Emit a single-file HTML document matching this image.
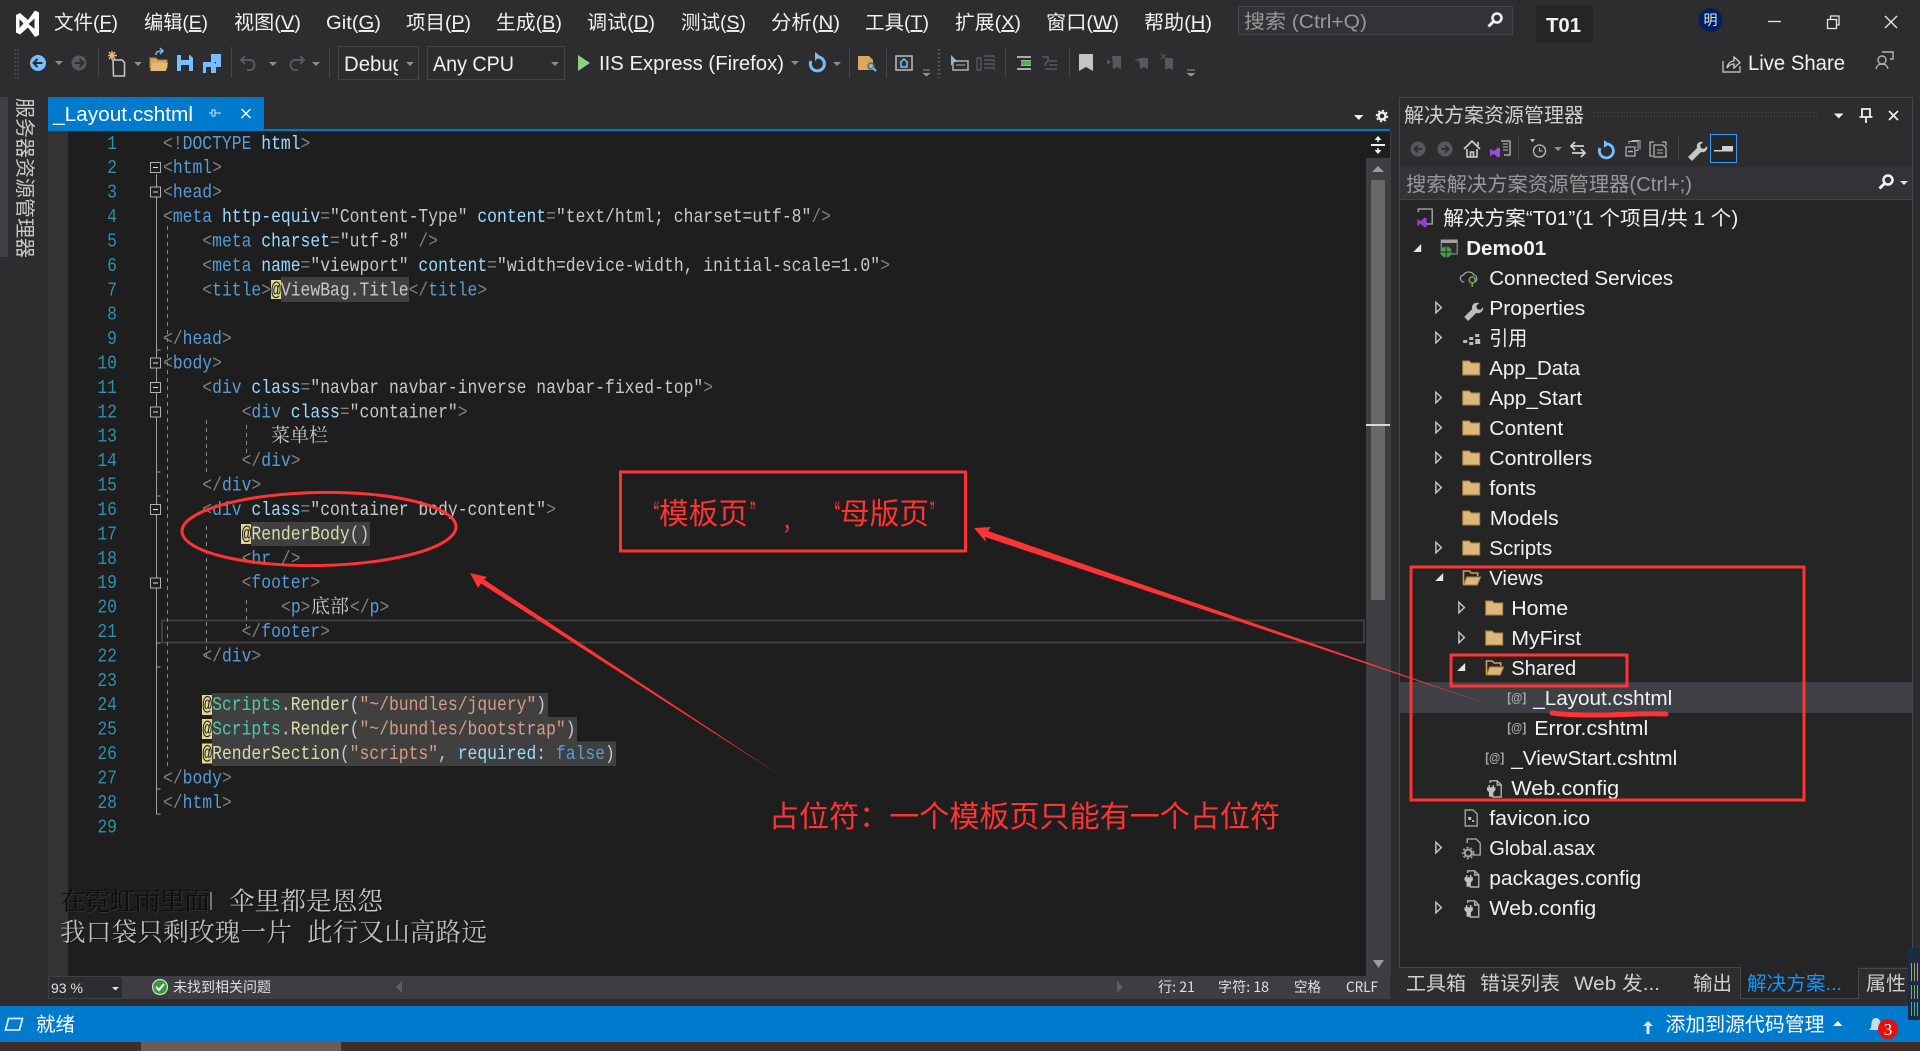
<!DOCTYPE html>
<html lang="zh"><head><meta charset="utf-8"><title>_Layout.cshtml - T01</title>
<style>
html,body{margin:0;padding:0;background:#2d2d30;width:1920px;height:1051px;overflow:hidden}
svg{display:block;position:absolute;left:0;top:0}
text{font-family:"Liberation Sans","Noto Sans CJK SC",sans-serif;white-space:pre}
.m{font-size:19.5px;fill:#f1f1f1}
.tr{font-size:20px;fill:#f1f1f1}
.c{font-family:"Liberation Mono","Noto Serif CJK SC",monospace;font-size:19.66px;fill:#c8c8c8}
.cj{font-family:"Noto Serif CJK SC","Liberation Serif",serif;font-size:19px;fill:#c8c8c8}
.n{font-family:"Liberation Mono",monospace;font-size:19.66px;fill:#2b91af}
.b{fill:#808080}.t{fill:#569cd6}.a{fill:#9cdcfe}.s{fill:#d69d85}.g{fill:#4ec9b0}.y{fill:#dcdcaa}
.st{font-size:14px;fill:#e0e0e0;font-family:"Noto Sans CJK SC","Liberation Sans",sans-serif}
.ly{font-family:"Noto Serif CJK SC","Liberation Serif",serif;font-size:25.6px}
.rd{font-family:"Noto Sans CJK SC",sans-serif;fill:#f33}
.bt{font-size:19.5px;fill:#d0d0d0}
</style></head><body>
<svg width="1920" height="1051" viewBox="0 0 1920 1051" xmlns="http://www.w3.org/2000/svg">
<defs>
<g id="fo"><path d="M0 1h6.500l2 2h8.500v12H0z" fill="#dcb67a" stroke="#a9803f" stroke-width="1"/></g>
<g id="fop"><path d="M0 1h6.500l2 2h6.500v3" fill="none" stroke="#c9a15c" stroke-width="1.600"/><path d="M.800 1v14" stroke="#c9a15c" stroke-width="1.600"/><path d="M1 15l3-8h14l-3.500 8z" fill="#dcb67a" stroke="#a9803f"/></g>
<path id="ar" d="M.700.700l5.500 5.300-5.500 5.300z" fill="none" stroke="#c8c8c8" stroke-width="1.400"/>
<path id="ad" d="M8 0v8H0z" fill="#e6e6e6"/>
<g id="wc" fill="none" stroke="#b0b0b0" stroke-width="1.400"><path d="M5 3V.800h7l4 4V17H7"/><path d="M12 1v4h4"/><path d="M4 5v3.500M8 5v3.500M2.500 8h7v2l-2 2v4h-3v-4l-2-2z" fill="#c0c0c0" stroke="#c0c0c0"/></g>
<path id="cr" d="M0 0h8l-4 4z" fill="#8f8f8f"/>
</defs>

<rect width="1920" height="1051" fill="#2d2d30"/>

<!-- title bar -->
<path d="M16 15l4-2 8 7 7-9.500 4 2v22.500l-4 2-7-9.500-8 7-4-2zM19.500 19v9l4-4.500zM28.500 24l6 5V18.500z" fill="#fff" fill-rule="evenodd"/>
<text class="m" x="54" y="29" textLength="64" lengthAdjust="spacingAndGlyphs">文件(<tspan text-decoration="underline">F</tspan>)</text>
<text class="m" x="144" y="29" textLength="64" lengthAdjust="spacingAndGlyphs">编辑(<tspan text-decoration="underline">E</tspan>)</text>
<text class="m" x="234" y="29" textLength="67" lengthAdjust="spacingAndGlyphs">视图(<tspan text-decoration="underline">V</tspan>)</text>
<text class="m" x="326" y="29" textLength="55" lengthAdjust="spacingAndGlyphs">Git(<tspan text-decoration="underline">G</tspan>)</text>
<text class="m" x="406" y="29" textLength="65" lengthAdjust="spacingAndGlyphs">项目(<tspan text-decoration="underline">P</tspan>)</text>
<text class="m" x="496" y="29" textLength="66" lengthAdjust="spacingAndGlyphs">生成(<tspan text-decoration="underline">B</tspan>)</text>
<text class="m" x="587" y="29" textLength="68" lengthAdjust="spacingAndGlyphs">调试(<tspan text-decoration="underline">D</tspan>)</text>
<text class="m" x="681" y="29" textLength="65" lengthAdjust="spacingAndGlyphs">测试(<tspan text-decoration="underline">S</tspan>)</text>
<text class="m" x="771" y="29" textLength="69" lengthAdjust="spacingAndGlyphs">分析(<tspan text-decoration="underline">N</tspan>)</text>
<text class="m" x="865" y="29" textLength="64" lengthAdjust="spacingAndGlyphs">工具(<tspan text-decoration="underline">T</tspan>)</text>
<text class="m" x="955" y="29" textLength="66" lengthAdjust="spacingAndGlyphs">扩展(<tspan text-decoration="underline">X</tspan>)</text>
<text class="m" x="1046" y="29" textLength="73" lengthAdjust="spacingAndGlyphs">窗口(<tspan text-decoration="underline">W</tspan>)</text>
<text class="m" x="1144" y="29" textLength="68" lengthAdjust="spacingAndGlyphs">帮助(<tspan text-decoration="underline">H</tspan>)</text>
<rect x="1238.500" y="6.500" width="274" height="28" fill="#333337" stroke="#434346"/>
<text x="1244" y="28" font-size="19.500" fill="#999" textLength="123" lengthAdjust="spacingAndGlyphs">搜索 (Ctrl+Q)</text>
<g stroke="#f1f1f1" fill="none"><circle cx="1497" cy="18" r="4.500" stroke-width="2.500"/><path d="M1493.500 21.500l-5 5" stroke-width="3"/></g>
<rect x="1536" y="5" width="57" height="38" fill="#252526"/>
<text x="1546" y="32" font-size="20" font-weight="700" fill="#f1f1f1" textLength="35" lengthAdjust="spacingAndGlyphs">T01</text>
<circle cx="1710.500" cy="20" r="12" fill="#002060"/>
<text x="1703.500" y="25" font-size="14" fill="#e8e8e8" style="font-family:'Noto Sans CJK SC',sans-serif">明</text>
<path d="M1768 21.500h13" stroke="#e8e8e8" stroke-width="1.300"/>
<path d="M1827.500 19.500h9v9h-9zM1830.500 19v-3h8.500v9h-2.500" fill="none" stroke="#e8e8e8" stroke-width="1.300"/>
<path d="M1885 16l12 12M1897 16l-12 12" stroke="#e8e8e8" stroke-width="1.300"/>

<!-- main toolbar -->
<path d="M15 49v29M18 49v29" stroke="#55555a" stroke-dasharray="1.500 2.500" stroke-width="1.500"/>
<circle cx="38" cy="63" r="8" fill="#75beff"/><path d="M42.500 63h-8M37.500 59l-4 4 4 4" stroke="#2d2d30" stroke-width="2" fill="none"/>
<use href="#cr" x="55" y="61"/>
<circle cx="79" cy="63" r="7.500" fill="#58585c"/><path d="M74.500 63h8M79.500 59l4 4-4 4" stroke="#2d2d30" stroke-width="2" fill="none"/>
<path d="M98.500 47v31" stroke="#46464a"/>
<path d="M113 60h9l2.500 2.500V76h-11z" fill="none" stroke="#c8c8c8" stroke-width="1.500"/><path d="M112 51v9M108 55.500h9M109 52l6 7M115 52l-6 7" stroke="#e8ba70" stroke-width="1.500"/>
<use href="#cr" x="134" y="62"/>
<path d="M150 68h17v-8h-9l-2-2h-6z" fill="#d8a95c" stroke="#a9803f"/><path d="M150 71l3-8h15l-2 8z" fill="#e6b974"/><path d="M156 55c0-4 3-4 6-4M160 48l3 3-3 3" stroke="#75beff" stroke-width="1.500" fill="none"/>
<path d="M177 55h13l3 3v13h-16z" fill="#75beff"/><path d="M181 55h8v5h-8z" fill="#2d2d30"/><path d="M181 65h8v6h-8z" fill="#2d2d30"/>
<path d="M203 62h11l2 2v9h-13z" fill="#75beff"/><path d="M211 54h10v13h-5v-5h-5z" fill="#75beff"/><path d="M206 67h5v6h-5z" fill="#2d2d30"/>
<path d="M231.500 47v31" stroke="#46464a"/>
<path d="M245 56l-4 4 4 4M241 60h9c6 0 6 10 0 10h-3" stroke="#5a5a5e" stroke-width="2" fill="none"/>
<use href="#cr" x="269" y="62"/>
<path d="M300 56l4 4-4 4M304 60h-9c-6 0-6 10 0 10h3" stroke="#5a5a5e" stroke-width="2" fill="none"/>
<use href="#cr" x="312" y="62"/>
<path d="M329.500 47v31" stroke="#46464a"/>
<rect x="338.500" y="46.500" width="80" height="33" fill="#2d2d30" stroke="#434346"/>
<text x="344" y="71" font-size="21" fill="#f1f1f1" textLength="60" lengthAdjust="spacingAndGlyphs">Debug</text>
<rect x="398" y="48" width="20" height="30" fill="#2d2d30"/>
<use href="#cr" x="406" y="62"/>
<rect x="427.500" y="46.500" width="137" height="33" fill="#2d2d30" stroke="#434346"/>
<text x="433" y="71" font-size="21" fill="#f1f1f1" textLength="81" lengthAdjust="spacingAndGlyphs">Any CPU</text>
<use href="#cr" x="551" y="62"/>
<path d="M578 55l12 8-12 8z" fill="#89d185"/>
<text x="599" y="70" font-size="20.500" fill="#f1f1f1" textLength="185" lengthAdjust="spacingAndGlyphs">IIS Express (Firefox)</text>
<use href="#cr" x="791" y="61"/>
<path d="M811 61a7 7 0 1 0 5-4" fill="none" stroke="#75beff" stroke-width="3"/><path d="M815 52v9l5-5z" fill="#75beff"/>
<use href="#cr" x="833" y="62"/>
<path d="M849.500 47v31" stroke="#46464a"/>
<path d="M858 56h11l4 4v10h-15z" fill="#d8a95c"/><circle cx="871" cy="66" r="3" fill="none" stroke="#2b6fb0" stroke-width="1.500"/><path d="M873 68l3 3" stroke="#75beff" stroke-width="2"/>
<path d="M886.500 47v31" stroke="#46464a"/>
<rect x="896" y="56" width="16" height="14" fill="#333" stroke="#bbb" stroke-width="1.500"/><path d="M900 63l4-4 4 4M901 63v4h6v-4" stroke="#75beff" stroke-width="1.500" fill="none"/>
<path d="M923 70h7M923 73l3.500 3 3.500-3" stroke="#8f8f8f" fill="#8f8f8f"/>
<path d="M939 49v29" stroke="#55555a" stroke-dasharray="1.500 2.500" stroke-width="3"/>
<path d="M951 55l7 7h-4l-3 4z" fill="#75beff"/><path d="M953 61h15v9h-15z" fill="none" stroke="#b0b0b0" stroke-width="1.500"/><path d="M956 65h9" stroke="#b0b0b0"/>
<path d="M977 58h4v12h-4zM984 56h10v2M984 60h10v2M984 64h10v2M984 68h10v2" fill="none" stroke="#58585c" stroke-width="1.400"/>
<path d="M1005.500 47v31" stroke="#46464a"/>
<path d="M1017 57h14M1021 61h10M1021 65h10M1017 69h14" stroke="#d6d6d6" stroke-width="1.500"/><path d="M1021 61h10v4h-10z" fill="#4caf50"/>
<path d="M1042 57h6v4l-3 3v2M1049 61h8M1049 65h8M1045 69h12" stroke="#58585c" stroke-width="1.500" fill="none"/>
<path d="M1069.500 47v31" stroke="#46464a"/>
<path d="M1079 54h14v17l-7-4-7 4z" fill="#c4c4c4"/>
<path d="M1112 56h9v13l-4-2-4 2zM1107 59l4 3-4 3" fill="#58585c"/>
<path d="M1139 58h9v11l-4-2-4 2zM1134 59h6v3" fill="#58585c"/>
<path d="M1165 58h8v12l-4-2-4 2z" fill="#58585c"/><path d="M1161 54l5 5M1166 54l-5 5" stroke="#58585c"/>
<path d="M1187 70h8M1187 73l4 3 4-3" stroke="#8f8f8f" fill="#8f8f8f"/>

<path d="M1723 61v11h17v-6" fill="none" stroke="#b5b5b5" stroke-width="1.400"/><path d="M1727 68c1-5 4-7 7-7v-4l6 5.500-6 5.500v-4c-3 0-5 1-7 4z" fill="none" stroke="#d0d0d0" stroke-width="1.300"/>
<text x="1748" y="70" font-size="21" fill="#f1f1f1" textLength="97" lengthAdjust="spacingAndGlyphs">Live Share</text>
<circle cx="1882" cy="60" r="4" fill="none" stroke="#b5b5b5" stroke-width="1.400"/><path d="M1876 69c1-4 3-5 6-5s5 1 6 5M1882 52h11v7h-3" fill="none" stroke="#b5b5b5" stroke-width="1.400"/>

<!-- server explorer strip -->
<rect x="0" y="97" width="8" height="160" fill="#3f3f46"/>
<text transform="translate(14,98) rotate(90) translate(0,-22)" x="0" y="18" font-size="20" fill="#c8c8c8" textLength="160" lengthAdjust="spacingAndGlyphs" style="font-family:'Noto Sans CJK SC',sans-serif">服务器资源管理器</text>

<!-- tabs -->
<rect x="48" y="97" width="216" height="34" fill="#007acc"/>
<rect x="48" y="129" width="1342" height="2" fill="#007acc"/>
<text x="53" y="121" font-size="20" fill="#fff" textLength="140" lengthAdjust="spacingAndGlyphs">_Layout.cshtml</text>
<path d="M212 110h3v6h-3zM215 109.500v7M215 113h6M209 113h3" stroke="#d8e8f5" fill="none"/>
<path d="M241.500 109l9 9M250.500 109l-9 9" stroke="#fff" stroke-width="1.300"/>
<path d="M1354 115h9.500l-4.750 5z" fill="#f1f1f1"/>
<circle cx="1382" cy="116" r="3.500" fill="none" stroke="#f1f1f1" stroke-width="2.500"/><circle cx="1382" cy="116" r="5.500" fill="none" stroke="#f1f1f1" stroke-width="1.500" stroke-dasharray="2 2.300"/>

<!-- editor -->
<rect x="48" y="131" width="20" height="845" fill="#333333"/>
<rect x="68" y="131" width="1298" height="845" fill="#1e1e1e"/>
<rect x="1366" y="131" width="25" height="845" fill="#3e3e42"/>
<rect x="1366" y="131" width="24" height="27" fill="#1e1e1e"/>
<path d="M1371 145h14" stroke="#f0f0f0" stroke-width="2"/><path d="M1378 142v-4M1378 148v4" stroke="#f0f0f0" stroke-width="1.500"/><path d="M1374.500 140l3.500-4 3.500 4zM1374.500 150l3.500 4 3.500-4z" fill="#f0f0f0"/>
<path d="M1378 166l-6 6h12z" fill="#9a9a9a"/>
<rect x="1371" y="180" width="14" height="420" fill="#686868"/>
<rect x="1366" y="424" width="24" height="2" fill="#d8d8d8"/>
<path d="M1373 960h11l-5.500 8z" fill="#9a9a9a"/>
<rect x="48" y="976" width="1342" height="23" fill="#3e3e42"/>
<rect x="48.500" y="976.500" width="74" height="22" fill="#2d2d30" stroke="#3f3f46"/>
<text class="st" x="51" y="993" style="font-family:'Liberation Sans',sans-serif" font-size="15" textLength="32" lengthAdjust="spacingAndGlyphs">93 %</text>
<path d="M112 987h7l-3.500 3.500z" fill="#e0e0e0"/>
<circle cx="160" cy="987" r="7.500" fill="#389a3d" stroke="#d8d8d8" stroke-width="1.200"/><path d="M156 987l3 3 5-6" stroke="#fff" stroke-width="2" fill="none"/>
<text class="st" x="173" y="992" textLength="98" lengthAdjust="spacingAndGlyphs">未找到相关问题</text>
<path d="M402 981v12l-6-6z" fill="#5e5e62"/>
<path d="M1117 981v12l6-6z" fill="#5e5e62"/>
<text class="st" x="1158" y="992" textLength="37" lengthAdjust="spacingAndGlyphs">行: 21</text>
<text class="st" x="1218" y="992" textLength="51" lengthAdjust="spacingAndGlyphs">字符: 18</text>
<text class="st" x="1294" y="992" textLength="27" lengthAdjust="spacingAndGlyphs">空格</text>
<text class="st" x="1346" y="992" textLength="32" lengthAdjust="spacingAndGlyphs">CRLF</text>

<!-- highlights -->
<rect x="281" y="277" width="128" height="25" fill="#404040"/><rect x="271" y="280" width="10" height="19" fill="#e0d68f"/>
<rect x="251" y="522" width="119" height="24" fill="#404040"/><rect x="241" y="524" width="10" height="20" fill="#e0d68f"/>
<rect x="212" y="693" width="336" height="24" fill="#404040"/><rect x="202" y="695" width="10" height="20" fill="#e0d68f"/>
<rect x="212" y="717" width="365" height="24.500" fill="#404040"/><rect x="202" y="719" width="10" height="20" fill="#e0d68f"/>
<rect x="212" y="741.500" width="404" height="24.500" fill="#404040"/><rect x="202" y="743.500" width="10" height="20" fill="#e0d68f"/>
<rect x="162" y="620.500" width="1202" height="22" fill="none" stroke="#3f3f3f" stroke-width="2"/>

<!-- fold margin -->
<path d="M156.500 174v640h4M156.500 350h4M156.500 472h4M156.500 496h4M156.500 643h4M156.500 667h4M156.500 789h4" stroke="#a0a0a0" fill="none"/>
<path d="M167.500 226v540" stroke="#8a8a8a" stroke-dasharray="4 4"/>
<path d="M206.500 420v53M206.500 526v135" stroke="#8a8a8a" stroke-dasharray="4 4"/>
<path d="M246.500 425v28M246.500 600v27" stroke="#8a8a8a" stroke-dasharray="4 4"/>
<g fill="#1e1e1e" stroke="#b0b0b0">
<rect x="150.500" y="162.500" width="10" height="10"/><rect x="150.500" y="187" width="10" height="10"/><rect x="150.500" y="358" width="10" height="10"/><rect x="150.500" y="382.500" width="10" height="10"/><rect x="150.500" y="407" width="10" height="10"/><rect x="150.500" y="504.500" width="10" height="10"/><rect x="150.500" y="578" width="10" height="10"/>
</g>
<path d="M153 167.500h5M153 192h5M153 363h5M153 387.500h5M153 412h5M153 509.500h5M153 583h5" stroke="#e0e0e0"/>

<g transform="translate(0,-.5)">
<!-- line numbers -->
<g class="n" text-anchor="end">
<text class="n" transform="translate(117,149.300) scale(.8333,1)">1</text>
<text class="n" transform="translate(117,173.700) scale(.8333,1)">2</text>
<text class="n" transform="translate(117,198.100) scale(.8333,1)">3</text>
<text class="n" transform="translate(117,222.500) scale(.8333,1)">4</text>
<text class="n" transform="translate(117,246.900) scale(.8333,1)">5</text>
<text class="n" transform="translate(117,271.400) scale(.8333,1)">6</text>
<text class="n" transform="translate(117,295.800) scale(.8333,1)">7</text>
<text class="n" transform="translate(117,320.200) scale(.8333,1)">8</text>
<text class="n" transform="translate(117,344.600) scale(.8333,1)">9</text>
<text class="n" transform="translate(117,369) scale(.8333,1)">10</text>
<text class="n" transform="translate(117,393.400) scale(.8333,1)">11</text>
<text class="n" transform="translate(117,417.800) scale(.8333,1)">12</text>
<text class="n" transform="translate(117,442.200) scale(.8333,1)">13</text>
<text class="n" transform="translate(117,466.600) scale(.8333,1)">14</text>
<text class="n" transform="translate(117,491) scale(.8333,1)">15</text>
<text class="n" transform="translate(117,515.500) scale(.8333,1)">16</text>
<text class="n" transform="translate(117,539.900) scale(.8333,1)">17</text>
<text class="n" transform="translate(117,564.300) scale(.8333,1)">18</text>
<text class="n" transform="translate(117,588.700) scale(.8333,1)">19</text>
<text class="n" transform="translate(117,613.100) scale(.8333,1)">20</text>
<text class="n" transform="translate(117,637.500) scale(.8333,1)">21</text>
<text class="n" transform="translate(117,661.900) scale(.8333,1)">22</text>
<text class="n" transform="translate(117,686.300) scale(.8333,1)">23</text>
<text class="n" transform="translate(117,710.700) scale(.8333,1)">24</text>
<text class="n" transform="translate(117,735.100) scale(.8333,1)">25</text>
<text class="n" transform="translate(117,759.600) scale(.8333,1)">26</text>
<text class="n" transform="translate(117,784) scale(.8333,1)">27</text>
<text class="n" transform="translate(117,808.400) scale(.8333,1)">28</text>
<text class="n" transform="translate(117,832.800) scale(.8333,1)">29</text>
</g>

<!-- code -->
<text class="c" transform="translate(163,149.300) scale(.8333,1)"><tspan class="b">&lt;!</tspan><tspan class="t">DOCTYPE</tspan> <tspan class="a">html</tspan><tspan class="b">&gt;</tspan></text>
<text class="c" transform="translate(163,173.700) scale(.8333,1)"><tspan class="b">&lt;</tspan><tspan class="t">html</tspan><tspan class="b">&gt;</tspan></text>
<text class="c" transform="translate(163,198.100) scale(.8333,1)"><tspan class="b">&lt;</tspan><tspan class="t">head</tspan><tspan class="b">&gt;</tspan></text>
<text class="c" transform="translate(163,222.500) scale(.8333,1)"><tspan class="b">&lt;</tspan><tspan class="t">meta</tspan> <tspan class="a">http-equiv</tspan><tspan class="b">=</tspan>"Content-Type" <tspan class="a">content</tspan><tspan class="b">=</tspan>"text/html; charset=utf-8"<tspan class="b">/&gt;</tspan></text>
<text class="c" transform="translate(202.300,246.900) scale(.8333,1)"><tspan class="b">&lt;</tspan><tspan class="t">meta</tspan> <tspan class="a">charset</tspan><tspan class="b">=</tspan>"utf-8" <tspan class="b">/&gt;</tspan></text>
<text class="c" transform="translate(202.300,271.400) scale(.8333,1)"><tspan class="b">&lt;</tspan><tspan class="t">meta</tspan> <tspan class="a">name</tspan><tspan class="b">=</tspan>"viewport" <tspan class="a">content</tspan><tspan class="b">=</tspan>"width=device-width, initial-scale=1.0"<tspan class="b">&gt;</tspan></text>
<text class="c" transform="translate(202.300,295.800) scale(.8333,1)"><tspan class="b">&lt;</tspan><tspan class="t">title</tspan><tspan class="b">&gt;</tspan><tspan fill="#1e1e1e">@</tspan>ViewBag.Title<tspan class="b">&lt;/</tspan><tspan class="t">title</tspan><tspan class="b">&gt;</tspan></text>
<text class="c" transform="translate(163,344.600) scale(.8333,1)"><tspan class="b">&lt;/</tspan><tspan class="t">head</tspan><tspan class="b">&gt;</tspan></text>
<text class="c" transform="translate(163,369) scale(.8333,1)"><tspan class="b">&lt;</tspan><tspan class="t">body</tspan><tspan class="b">&gt;</tspan></text>
<text class="c" transform="translate(202.300,393.400) scale(.8333,1)"><tspan class="b">&lt;</tspan><tspan class="t">div</tspan> <tspan class="a">class</tspan><tspan class="b">=</tspan>"navbar navbar-inverse navbar-fixed-top"<tspan class="b">&gt;</tspan></text>
<text class="c" transform="translate(241.600,417.800) scale(.8333,1)"><tspan class="b">&lt;</tspan><tspan class="t">div</tspan> <tspan class="a">class</tspan><tspan class="b">=</tspan>"container"<tspan class="b">&gt;</tspan></text>
<text class="cj" x="271" y="442">菜单栏</text>
<text class="c" transform="translate(241.600,466.600) scale(.8333,1)"><tspan class="b">&lt;/</tspan><tspan class="t">div</tspan><tspan class="b">&gt;</tspan></text>
<text class="c" transform="translate(202.300,491) scale(.8333,1)"><tspan class="b">&lt;/</tspan><tspan class="t">div</tspan><tspan class="b">&gt;</tspan></text>
<text class="c" transform="translate(202.300,515.500) scale(.8333,1)"><tspan class="b">&lt;</tspan><tspan class="t">div</tspan> <tspan class="a">class</tspan><tspan class="b">=</tspan>"container body-content"<tspan class="b">&gt;</tspan></text>
<text class="c" transform="translate(241.600,539.900) scale(.8333,1)"><tspan fill="#1e1e1e">@</tspan><tspan class="y">RenderBody</tspan>()</text>
<text class="c" transform="translate(241.600,564.300) scale(.8333,1)"><tspan class="b">&lt;</tspan><tspan class="t">hr</tspan> <tspan class="b">/&gt;</tspan></text>
<text class="c" transform="translate(241.600,588.700) scale(.8333,1)"><tspan class="b">&lt;</tspan><tspan class="t">footer</tspan><tspan class="b">&gt;</tspan></text>
<text class="c" transform="translate(281,613.100) scale(.8333,1)"><tspan class="b">&lt;</tspan><tspan class="t">p</tspan><tspan class="b">&gt;</tspan></text>
<text class="cj" x="311" y="613">底部</text>
<text class="c" transform="translate(350,613.100) scale(.8333,1)"><tspan class="b">&lt;/</tspan><tspan class="t">p</tspan><tspan class="b">&gt;</tspan></text>
<text class="c" transform="translate(241.600,637.500) scale(.8333,1)"><tspan class="b">&lt;/</tspan><tspan class="t">footer</tspan><tspan class="b">&gt;</tspan></text>
<text class="c" transform="translate(202.300,661.900) scale(.8333,1)"><tspan class="b">&lt;/</tspan><tspan class="t">div</tspan><tspan class="b">&gt;</tspan></text>
<text class="c" transform="translate(202.300,710.700) scale(.8333,1)"><tspan fill="#1e1e1e">@</tspan><tspan class="g">Scripts</tspan>.<tspan class="y">Render</tspan>(<tspan class="s">"~/bundles/jquery"</tspan>)</text>
<text class="c" transform="translate(202.300,735.100) scale(.8333,1)"><tspan fill="#1e1e1e">@</tspan><tspan class="g">Scripts</tspan>.<tspan class="y">Render</tspan>(<tspan class="s">"~/bundles/bootstrap"</tspan>)</text>
<text class="c" transform="translate(202.300,759.600) scale(.8333,1)"><tspan fill="#1e1e1e">@</tspan><tspan class="y">RenderSection</tspan>(<tspan class="s">"scripts"</tspan>, <tspan class="a">required</tspan>: <tspan class="t">false</tspan>)</text>
<text class="c" transform="translate(163,784) scale(.8333,1)"><tspan class="b">&lt;/</tspan><tspan class="t">body</tspan><tspan class="b">&gt;</tspan></text>
<text class="c" transform="translate(163,808.400) scale(.8333,1)"><tspan class="b">&lt;/</tspan><tspan class="t">html</tspan><tspan class="b">&gt;</tspan></text>
</g>

<!-- lyrics -->
<text class="ly" x="61" y="911" fill="#333" textLength="150" lengthAdjust="spacing">在霓虹雨里面</text>
<text class="ly" x="60" y="910" fill="#0c0c0c" textLength="150" lengthAdjust="spacing">在霓虹雨里面</text>
<path d="M211 892v18" stroke="#ccc"/>
<text class="ly" x="230" y="911" fill="#111" textLength="154" lengthAdjust="spacing">伞里都是恩怨</text>
<text class="ly" x="229" y="910" fill="#c4c4c4" textLength="154" lengthAdjust="spacing">伞里都是恩怨</text>
<text class="ly" x="61" y="942" fill="#111" textLength="232" lengthAdjust="spacing">我口袋只剩玫瑰一片</text>
<text class="ly" x="60" y="941" fill="#bdbdbd" textLength="232" lengthAdjust="spacing">我口袋只剩玫瑰一片</text>
<text class="ly" x="308" y="942" fill="#111" textLength="180" lengthAdjust="spacing">此行又山高路远</text>
<text class="ly" x="307" y="941" fill="#bdbdbd" textLength="180" lengthAdjust="spacing">此行又山高路远</text>

<!-- solution explorer -->
<rect x="1399.500" y="97.500" width="513" height="870" fill="#2d2d30" stroke="#46464a"/>
<text x="1404" y="122" font-size="20" fill="#d0d0d0" textLength="180" lengthAdjust="spacingAndGlyphs" style="font-family:'Noto Sans CJK SC',sans-serif">解决方案资源管理器</text>
<path d="M1594 112.500h224M1594 116.500h224" stroke="#46464a" stroke-dasharray="1 2"/>
<path d="M1834 113.500h9.500l-4.750 5z" fill="#f1f1f1"/>
<path d="M1862 109h8v8h-8zM1859.500 117h13M1866 117v6" fill="none" stroke="#f1f1f1" stroke-width="1.800"/>
<path d="M1889 111l9 9M1898 111l-9 9" stroke="#f1f1f1" stroke-width="1.600"/>
<circle cx="1418" cy="149" r="7.500" fill="#58585c"/><path d="M1422 149h-7M1418 145.500l-3.500 3.500 3.500 3.500" stroke="#2d2d30" stroke-width="1.800" fill="none"/>
<circle cx="1445" cy="149" r="7.500" fill="#58585c"/><path d="M1441 149h7M1445 145.500l3.500 3.500-3.500 3.500" stroke="#2d2d30" stroke-width="1.800" fill="none"/>
<path d="M1464 149l8-8 8 8M1467 149v8h10v-8M1470.500 157v-5h3v5M1478 142v4" fill="none" stroke="#d0d0d0" stroke-width="1.600"/>
<path d="M1501 141h9v14h-6" fill="none" stroke="#bdbdbd" stroke-width="1.300"/><path d="M1503 144h5M1503 147h5M1503 150h5" stroke="#bdbdbd"/><path d="M1490 149l4 2 4-3.500 2 1v8l-2 1-4-3.500-4 2z" fill="#9b4fd6"/>
<path d="M1518.500 136v24" stroke="#46464a"/>
<circle cx="1539.500" cy="151" r="6" fill="none" stroke="#bdbdbd" stroke-width="1.300"/><path d="M1539.500 147.500v3.500h3" stroke="#bdbdbd" fill="none"/><path d="M1530 139h5l-2.500 3.500z" fill="#bdbdbd"/>
<use href="#cr" x="1554" y="147"/>
<path d="M1572 146h12M1575 142l-4 4 4 4M1584 153h-12M1581 149l4 4-4 4" fill="none" stroke="#d0d0d0" stroke-width="1.800"/>
<path d="M1600 148a7 7 0 1 0 5-4" fill="none" stroke="#75beff" stroke-width="2.800"/><path d="M1604 140v8l5-4z" fill="#75beff"/>
<path d="M1626 147h9v9h-9z" fill="none" stroke="#b0b0b0" stroke-width="1.300"/><path d="M1629 144v-2.500h9v9h-2M1632 142v-1.500h8v9" fill="none" stroke="#b0b0b0"/><path d="M1628 151.500h5" stroke="#75beff" stroke-width="1.500"/>
<path d="M1653 156h-3v-14h4M1662 142h4v4M1666 155v2" fill="none" stroke="#b0b0b0" stroke-width="1.300"/><path d="M1654 145h9l3 3v9h-12z" fill="none" stroke="#b0b0b0" stroke-width="1.300"/><path d="M1657 150h6M1657 153h6" stroke="#b0b0b0"/>
<path d="M1678.500 136v24" stroke="#46464a"/>
<path d="M1688 157l9-9c-1-4 2-7 6-6l-3 3 1 3 3 1 3-3c1 4-2 7-6 6l-9 9z" fill="#c8c8c8"/>
<rect x="1710.500" y="134.500" width="26" height="28" fill="#252526" stroke="#3399ff"/>
<path d="M1714 150h19v1.500h-19zM1722 146h11v4h-11z" fill="#d0d0d0"/>
<rect x="1400" y="167" width="497" height="32" fill="#333337"/>
<rect x="1897" y="167" width="15" height="32" fill="#333337"/>
<path d="M1400 199.500h512" stroke="#434346"/>
<text x="1406" y="191" font-size="20" fill="#999" textLength="286" lengthAdjust="spacingAndGlyphs">搜索解决方案资源管理器(Ctrl+;)</text>
<g stroke="#f1f1f1" fill="none"><circle cx="1888" cy="180" r="4.500" stroke-width="2.500"/><path d="M1884.500 183.500l-5 5" stroke-width="3"/></g>
<path d="M1900 181h8l-4 4z" fill="#e0e0e0"/>

<rect x="1400" y="200" width="512" height="767" fill="#252526"/>
<rect x="1400" y="682" width="512" height="31" fill="#3f3f46"/>

<!-- tree -->
<g transform="translate(-.8,0)">
<path d="M1419 212v-3h14v15h-8" fill="none" stroke="#b0b0b0" stroke-width="1.300"/><path d="M1418 219l3.500 2 4-3.500 2 1v8l-2 1-4-3.500-3.500 2z" fill="#8e44c9"/>
<text class="tr" x="1444" y="225" textLength="295" lengthAdjust="spacingAndGlyphs">解决方案“T01”(1 个项目/共 1 个)</text>
<use href="#ad" x="1414" y="244"/>
<rect x="1442" y="240" width="16" height="14" fill="#2d2d30" stroke="#a0a0a0"/><rect x="1442" y="240" width="16" height="3" fill="#a0a0a0"/><circle cx="1447" cy="252" r="5.500" fill="#4b9e4b"/><path d="M1441.500 252h11M1447 246.500v11" stroke="#252526"/>
<text class="tr" x="1467" y="255" font-weight="700" textLength="80" lengthAdjust="spacingAndGlyphs">Demo01</text>

<path d="M1465 282c-5 0-5-7-.5-7 1-4 9-4 10 0 4 0 4 7 .5 7" fill="none" stroke="#a0a0a0" stroke-width="1.300"/><circle cx="1473" cy="280" r="3" fill="none" stroke="#6ab04c" stroke-width="1.500"/><path d="M1473 283v4" stroke="#6ab04c" stroke-width="1.500"/>
<text class="tr" x="1490" y="285" textLength="184" lengthAdjust="spacingAndGlyphs">Connected Services</text>

<use href="#ar" x="1436" y="301.500"/>
<path d="M1465 317l8-8c-1-4 2-7 7-6l-3 3 1 3 3 1 3-3c.5 4-3 7-7 6l-8 8z" fill="#bdbdbd"/>
<text class="tr" x="1490" y="315" textLength="96" lengthAdjust="spacingAndGlyphs">Properties</text>

<use href="#ar" x="1436" y="331.500"/>
<path d="M1470 340h4v-3h-4zM1476 337h4v-3h-4zM1464 343h4v-3h-4zM1470 345h4v-3h-4zM1476 344h5v-5h-5z" fill="#bdbdbd"/>
<text class="tr" x="1490" y="345" textLength="38" lengthAdjust="spacingAndGlyphs">引用</text>

<use href="#fo" x="1463.500" y="360"/><text class="tr" x="1490" y="375" textLength="91" lengthAdjust="spacingAndGlyphs">App_Data</text>
<use href="#ar" x="1436" y="391.500"/><use href="#fo" x="1463.500" y="390"/><text class="tr" x="1490" y="405" textLength="93" lengthAdjust="spacingAndGlyphs">App_Start</text>
<use href="#ar" x="1436" y="421.500"/><use href="#fo" x="1463.500" y="420"/><text class="tr" x="1490" y="435" textLength="74" lengthAdjust="spacingAndGlyphs">Content</text>
<use href="#ar" x="1436" y="451.500"/><use href="#fo" x="1463.500" y="450"/><text class="tr" x="1490" y="465" textLength="103" lengthAdjust="spacingAndGlyphs">Controllers</text>
<use href="#ar" x="1436" y="481.500"/><use href="#fo" x="1463.500" y="480"/><text class="tr" x="1490" y="495" textLength="47" lengthAdjust="spacingAndGlyphs">fonts</text>
<use href="#fo" x="1463.500" y="510"/><text class="tr" x="1490.500" y="525" textLength="69" lengthAdjust="spacingAndGlyphs">Models</text>
<use href="#ar" x="1436" y="541.500"/><use href="#fo" x="1463.500" y="540"/><text class="tr" x="1490" y="555" textLength="63" lengthAdjust="spacingAndGlyphs">Scripts</text>
<use href="#ad" x="1436" y="573"/><use href="#fop" x="1463.500" y="570"/><text class="tr" x="1490" y="585" textLength="54" lengthAdjust="spacingAndGlyphs">Views</text>
<use href="#ar" x="1459" y="601.500"/><use href="#fo" x="1486.500" y="600"/><text class="tr" x="1512" y="615" textLength="57" lengthAdjust="spacingAndGlyphs">Home</text>
<use href="#ar" x="1459" y="631.500"/><use href="#fo" x="1486.500" y="630"/><text class="tr" x="1512" y="645" textLength="70" lengthAdjust="spacingAndGlyphs">MyFirst</text>
<use href="#ad" x="1458" y="663"/><use href="#fop" x="1486.500" y="660"/><text class="tr" x="1512" y="675" textLength="65" lengthAdjust="spacingAndGlyphs">Shared</text>
<text x="1508" y="702" font-size="13" font-weight="700" fill="#a8a8a8" textLength="19" lengthAdjust="spacingAndGlyphs">[@]</text>
<text class="tr" x="1534" y="705" textLength="139" lengthAdjust="spacingAndGlyphs">_Layout.cshtml</text>
<text x="1508" y="732" font-size="13" font-weight="700" fill="#a8a8a8" textLength="19" lengthAdjust="spacingAndGlyphs">[@]</text>
<text class="tr" x="1535" y="735" textLength="114" lengthAdjust="spacingAndGlyphs">Error.cshtml</text>
<text x="1486" y="762" font-size="13" font-weight="700" fill="#a8a8a8" textLength="19" lengthAdjust="spacingAndGlyphs">[@]</text>
<text class="tr" x="1512" y="765" textLength="166" lengthAdjust="spacingAndGlyphs">_ViewStart.cshtml</text>
<use href="#wc" x="1486" y="780"/><text class="tr" x="1512" y="795" textLength="108" lengthAdjust="spacingAndGlyphs">Web.config</text>
<path d="M1466 810h8l4 4v12h-12z" fill="none" stroke="#a0a0a0" stroke-width="1.400"/><rect x="1469" y="817" width="3" height="3" fill="#c0c0c0"/><rect x="1473" y="820" width="2" height="2" fill="#c0c0c0"/>
<text class="tr" x="1490" y="825" textLength="101" lengthAdjust="spacingAndGlyphs">favicon.ico</text>
<use href="#ar" x="1436" y="841.500"/><path d="M1468 843v-4h9l4 4v12h-8" fill="none" stroke="#b0b0b0" stroke-width="1.300"/><circle cx="1469" cy="853" r="3.500" fill="none" stroke="#a8a8a8" stroke-width="2"/><circle cx="1469" cy="853" r="5.500" fill="none" stroke="#a8a8a8" stroke-width="1.500" stroke-dasharray="2 2"/>
<text class="tr" x="1490" y="855" textLength="106" lengthAdjust="spacingAndGlyphs">Global.asax</text>
<use href="#wc" x="1463.500" y="870"/><text class="tr" x="1490" y="885" textLength="152" lengthAdjust="spacingAndGlyphs">packages.config</text>
<use href="#ar" x="1436" y="901.500"/><use href="#wc" x="1463.500" y="900"/><text class="tr" x="1490" y="915" textLength="107" lengthAdjust="spacingAndGlyphs">Web.config</text>
</g>

<!-- bottom tabs -->
<rect x="1400" y="967" width="512" height="39" fill="#2d2d30"/>
<path d="M1399.500 967.500H1740.500V998.500H1858.500V968.500H1912" fill="#252526" stroke="#46464a"/>
<rect x="1741" y="966" width="117" height="32" fill="#252526"/>
<text class="bt" x="1406" y="990" textLength="60" lengthAdjust="spacingAndGlyphs">工具箱</text>
<text class="bt" x="1480" y="990" textLength="80" lengthAdjust="spacingAndGlyphs">错误列表</text>
<text class="bt" x="1574" y="990" textLength="86" lengthAdjust="spacingAndGlyphs">Web 发...</text>
<text class="bt" x="1693" y="990" textLength="39" lengthAdjust="spacingAndGlyphs">输出</text>
<text x="1747" y="990" font-size="19.500" fill="#0e97ff" textLength="95" lengthAdjust="spacingAndGlyphs">解决方案...</text>
<text class="bt" x="1866" y="990" textLength="40" lengthAdjust="spacingAndGlyphs">属性</text>

<!-- status bar -->
<rect x="0" y="1006" width="1920" height="36" fill="#007acc"/>
<rect x="0" y="1042" width="1920" height="9" fill="#402f28"/>
<rect x="141" y="1042" width="200" height="9" fill="#6b5d55"/>
<path d="M8.500 1018.500h14l-3 11.500h-14z" fill="none" stroke="#d5e9f7" stroke-width="1.800"/>
<text x="36" y="1031" font-size="19.500" fill="#fff" textLength="39" lengthAdjust="spacingAndGlyphs">就绪</text>
<path d="M1648 1021l-5 5h3.500v8h3v-8h3.500z" fill="#dbe9f4"/>
<text x="1665.500" y="1031" font-size="19.500" fill="#fff" textLength="159" lengthAdjust="spacingAndGlyphs">添加到源代码管理</text>
<path d="M1833 1026h9.500l-4.750-5z" fill="#fff"/>
<path d="M1869 1030c3-2 2-6 3-9 1-4 7-4 8 0 1 3 0 7 3 9z" fill="#c8dceb"/>
<circle cx="1888" cy="1029" r="10" fill="#e60f05"/>
<text x="1888" y="1035" font-size="17" fill="#fff" text-anchor="middle" style="font-family:'Liberation Serif',serif">3</text>

<rect x="1908" y="948" width="12" height="72" rx="2" fill="#1c2b44"/>
<path d="M1911 972h9" stroke="#b8a23f" stroke-width="18" stroke-dasharray="1 2"/>
<path d="M1911 992h9" stroke="#7fb24a" stroke-width="14" stroke-dasharray="1 2"/>
<path d="M1911 1009h9" stroke="#38b3a4" stroke-width="14" stroke-dasharray="1 2"/>

<!-- annotations -->
<rect x="620.500" y="472" width="345" height="79" fill="none" stroke="#f33" stroke-width="3"/>
<text class="rd" x="646" y="526" font-size="29" textLength="13" lengthAdjust="spacingAndGlyphs">“</text>
<text class="rd" x="659" y="524" font-size="29.500" textLength="89" lengthAdjust="spacingAndGlyphs">模板页</text>
<text class="rd" x="750" y="526" font-size="29" textLength="13" lengthAdjust="spacingAndGlyphs">”</text>
<text class="rd" x="784" y="528" font-size="26" textLength="6" lengthAdjust="spacingAndGlyphs">,</text>
<text class="rd" x="827" y="526" font-size="29" textLength="13" lengthAdjust="spacingAndGlyphs">“</text>
<text class="rd" x="840" y="524" font-size="29.500" textLength="89" lengthAdjust="spacingAndGlyphs">母版页</text>
<text class="rd" x="930" y="526" font-size="29" textLength="11" lengthAdjust="spacingAndGlyphs">”</text>
<text class="rd" x="769" y="827" font-size="30" textLength="511" lengthAdjust="spacingAndGlyphs">占位符：一个模板页只能有一个占位符</text>
<ellipse cx="319" cy="529" rx="137" ry="36.500" fill="none" stroke="#f33" stroke-width="3" transform="rotate(-1 319 529)"/>
<path d="M470 573l17 4-3 2.500L778 774 481 583.500l-3 4.500z" fill="#f33"/>
<path d="M974 528l17-1-3 4L1493 706 985 537l1 5z" fill="#f33"/>
<rect x="1411" y="567" width="393" height="233" fill="none" stroke="#f33" stroke-width="3"/>
<rect x="1451" y="655" width="176" height="31" fill="none" stroke="#f33" stroke-width="3"/>
<path d="M1552 713c15 2 30 2 50 2 20 0 40-2 64-1" fill="none" stroke="#f33" stroke-width="5" stroke-linecap="round"/>
</svg>
</body></html>
